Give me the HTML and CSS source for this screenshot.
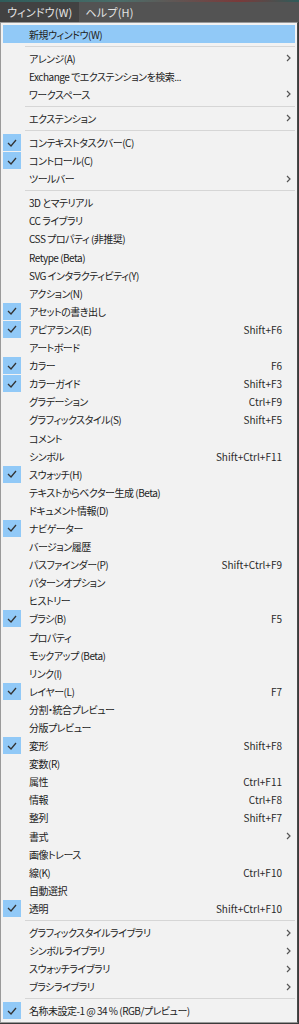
FILE: index.html
```html
<!DOCTYPE html>
<html lang="ja">
<head>
    <meta charset="UTF-8">
    <meta name="viewport" content="width=device-width, initial-scale=1.0">
    <title>ウィンドウ メニュー</title>
    <link rel="stylesheet" href="styles.css">
</head>
<body>
    <div class="strip"></div>

    <!-- Menu bar -->
    <div class="menubar">
        <span class="mb-item active">ウィンドウ(W)</span>
        <span class="mb-item">ヘルプ(H)</span>
    </div>

    <!-- Window dropdown -->
    <div class="menu">
        <div class="item hl"><span class="chk"></span><span class="label">新規ウィンドウ(W)</span></div>
        <div class="sep"></div>
        <div class="item"><span class="chk"></span><span class="label">アレンジ(A)</span><span class="sub"><svg width="5" height="8" viewBox="0 0 5 8"><path d="M1 1l3 3-3 3" fill="none" stroke="#555" stroke-width="1.2"/></svg></span></div>
        <div class="item"><span class="chk"></span><span class="label">Exchange でエクステンションを検索...</span></div>
        <div class="item"><span class="chk"></span><span class="label">ワークスペース</span><span class="sub"><svg width="5" height="8" viewBox="0 0 5 8"><path d="M1 1l3 3-3 3" fill="none" stroke="#555" stroke-width="1.2"/></svg></span></div>
        <div class="sep"></div>
        <div class="item"><span class="chk"></span><span class="label">エクステンション</span><span class="sub"><svg width="5" height="8" viewBox="0 0 5 8"><path d="M1 1l3 3-3 3" fill="none" stroke="#555" stroke-width="1.2"/></svg></span></div>
        <div class="sep"></div>
        <div class="item"><span class="chk on"><svg width="10" height="8" viewBox="0 0 10 8"><path d="M1 4l3 3 5-6" fill="none" stroke="#333" stroke-width="1.3"/></svg></span><span class="label">コンテキストタスクバー(C)</span></div>
        <div class="item"><span class="chk on"><svg width="10" height="8" viewBox="0 0 10 8"><path d="M1 4l3 3 5-6" fill="none" stroke="#333" stroke-width="1.3"/></svg></span><span class="label">コントロール(C)</span></div>
        <div class="item"><span class="chk"></span><span class="label">ツールバー</span><span class="sub"><svg width="5" height="8" viewBox="0 0 5 8"><path d="M1 1l3 3-3 3" fill="none" stroke="#555" stroke-width="1.2"/></svg></span></div>
        <div class="sep"></div>
        <div class="item"><span class="chk"></span><span class="label">3D とマテリアル</span></div>
        <div class="item"><span class="chk"></span><span class="label">CC ライブラリ</span></div>
        <div class="item"><span class="chk"></span><span class="label">CSS プロパティ (非推奨)</span></div>
        <div class="item"><span class="chk"></span><span class="label">Retype (Beta)</span></div>
        <div class="item"><span class="chk"></span><span class="label">SVG インタラクティビティ(Y)</span></div>
        <div class="item"><span class="chk"></span><span class="label">アクション(N)</span></div>
        <div class="item"><span class="chk on"><svg width="10" height="8" viewBox="0 0 10 8"><path d="M1 4l3 3 5-6" fill="none" stroke="#333" stroke-width="1.3"/></svg></span><span class="label">アセットの書き出し</span></div>
        <div class="item"><span class="chk on"><svg width="10" height="8" viewBox="0 0 10 8"><path d="M1 4l3 3 5-6" fill="none" stroke="#333" stroke-width="1.3"/></svg></span><span class="label">アピアランス(E)</span><span class="key">Shift+F6</span></div>
        <div class="item"><span class="chk"></span><span class="label">アートボード</span></div>
        <div class="item"><span class="chk on"><svg width="10" height="8" viewBox="0 0 10 8"><path d="M1 4l3 3 5-6" fill="none" stroke="#333" stroke-width="1.3"/></svg></span><span class="label">カラー</span><span class="key">F6</span></div>
        <div class="item"><span class="chk on"><svg width="10" height="8" viewBox="0 0 10 8"><path d="M1 4l3 3 5-6" fill="none" stroke="#333" stroke-width="1.3"/></svg></span><span class="label">カラーガイド</span><span class="key">Shift+F3</span></div>
        <div class="item"><span class="chk"></span><span class="label">グラデーション</span><span class="key">Ctrl+F9</span></div>
        <div class="item"><span class="chk"></span><span class="label">グラフィックスタイル(S)</span><span class="key">Shift+F5</span></div>
        <div class="item"><span class="chk"></span><span class="label">コメント</span></div>
        <div class="item"><span class="chk"></span><span class="label">シンボル</span><span class="key">Shift+Ctrl+F11</span></div>
        <div class="item"><span class="chk on"><svg width="10" height="8" viewBox="0 0 10 8"><path d="M1 4l3 3 5-6" fill="none" stroke="#333" stroke-width="1.3"/></svg></span><span class="label">スウォッチ(H)</span></div>
        <div class="item"><span class="chk"></span><span class="label">テキストからベクター生成 (Beta)</span></div>
        <div class="item"><span class="chk"></span><span class="label">ドキュメント情報(D)</span></div>
        <div class="item"><span class="chk on"><svg width="10" height="8" viewBox="0 0 10 8"><path d="M1 4l3 3 5-6" fill="none" stroke="#333" stroke-width="1.3"/></svg></span><span class="label">ナビゲーター</span></div>
        <div class="item"><span class="chk"></span><span class="label">バージョン履歴</span></div>
        <div class="item"><span class="chk"></span><span class="label">パスファインダー(P)</span><span class="key">Shift+Ctrl+F9</span></div>
        <div class="item"><span class="chk"></span><span class="label">パターンオプション</span></div>
        <div class="item"><span class="chk"></span><span class="label">ヒストリー</span></div>
        <div class="item"><span class="chk on"><svg width="10" height="8" viewBox="0 0 10 8"><path d="M1 4l3 3 5-6" fill="none" stroke="#333" stroke-width="1.3"/></svg></span><span class="label">ブラシ(B)</span><span class="key">F5</span></div>
        <div class="item"><span class="chk"></span><span class="label">プロパティ</span></div>
        <div class="item"><span class="chk"></span><span class="label">モックアップ (Beta)</span></div>
        <div class="item"><span class="chk"></span><span class="label">リンク(I)</span></div>
        <div class="item"><span class="chk on"><svg width="10" height="8" viewBox="0 0 10 8"><path d="M1 4l3 3 5-6" fill="none" stroke="#333" stroke-width="1.3"/></svg></span><span class="label">レイヤー(L)</span><span class="key">F7</span></div>
        <div class="item"><span class="chk"></span><span class="label">分割・統合プレビュー</span></div>
        <div class="item"><span class="chk"></span><span class="label">分版プレビュー</span></div>
        <div class="item"><span class="chk on"><svg width="10" height="8" viewBox="0 0 10 8"><path d="M1 4l3 3 5-6" fill="none" stroke="#333" stroke-width="1.3"/></svg></span><span class="label">変形</span><span class="key">Shift+F8</span></div>
        <div class="item"><span class="chk"></span><span class="label">変数(R)</span></div>
        <div class="item"><span class="chk"></span><span class="label">属性</span><span class="key">Ctrl+F11</span></div>
        <div class="item"><span class="chk"></span><span class="label">情報</span><span class="key">Ctrl+F8</span></div>
        <div class="item"><span class="chk"></span><span class="label">整列</span><span class="key">Shift+F7</span></div>
        <div class="item"><span class="chk"></span><span class="label">書式</span><span class="sub"><svg width="5" height="8" viewBox="0 0 5 8"><path d="M1 1l3 3-3 3" fill="none" stroke="#555" stroke-width="1.2"/></svg></span></div>
        <div class="item"><span class="chk"></span><span class="label">画像トレース</span></div>
        <div class="item"><span class="chk"></span><span class="label">線(K)</span><span class="key">Ctrl+F10</span></div>
        <div class="item"><span class="chk"></span><span class="label">自動選択</span></div>
        <div class="item"><span class="chk on"><svg width="10" height="8" viewBox="0 0 10 8"><path d="M1 4l3 3 5-6" fill="none" stroke="#333" stroke-width="1.3"/></svg></span><span class="label">透明</span><span class="key">Shift+Ctrl+F10</span></div>
        <div class="sep"></div>
        <div class="item"><span class="chk"></span><span class="label">グラフィックスタイルライブラリ</span><span class="sub"><svg width="5" height="8" viewBox="0 0 5 8"><path d="M1 1l3 3-3 3" fill="none" stroke="#555" stroke-width="1.2"/></svg></span></div>
        <div class="item"><span class="chk"></span><span class="label">シンボルライブラリ</span><span class="sub"><svg width="5" height="8" viewBox="0 0 5 8"><path d="M1 1l3 3-3 3" fill="none" stroke="#555" stroke-width="1.2"/></svg></span></div>
        <div class="item"><span class="chk"></span><span class="label">スウォッチライブラリ</span><span class="sub"><svg width="5" height="8" viewBox="0 0 5 8"><path d="M1 1l3 3-3 3" fill="none" stroke="#555" stroke-width="1.2"/></svg></span></div>
        <div class="item"><span class="chk"></span><span class="label">ブラシライブラリ</span><span class="sub"><svg width="5" height="8" viewBox="0 0 5 8"><path d="M1 1l3 3-3 3" fill="none" stroke="#555" stroke-width="1.2"/></svg></span></div>
        <div class="sep"></div>
        <div class="item"><span class="chk on"><svg width="10" height="8" viewBox="0 0 10 8"><path d="M1 4l3 3 5-6" fill="none" stroke="#333" stroke-width="1.3"/></svg></span><span class="label">名称未設定-1 @ 34 % (RGB/プレビュー)</span></div>
    </div>
</body>
</html>
```

FILE: styles.css
```css
body {
    margin: 0;
    background: #3a3a3a;
    font-family: "Noto Sans CJK JP", "Noto Sans", sans-serif;
    font-feature-settings: "palt";
    -webkit-font-smoothing: antialiased;
}
.strip {
    height: 2px;
    background: linear-gradient(90deg, #2f5c5a, #4a6e6a 40%, #7a3a3a 80%, #2f5c5a);
}
.menubar {
    display: flex;
    height: 20px;
    background: #535353;
}
.mb-item {
    display: flex;
    align-items: center;
    padding: 0 6px 0 7px;
    color: #e4e4e4;
    font-size: 11px;
    letter-spacing: 0.2px;
}
.mb-item.active {
    background: #424242;
}
.menu {
    width: 292px;
    padding: 2px;
    background: #f2f2f2;
    border: 1px solid #9a9a9a;
    border-right-color: #4a4a4a;
}
.item {
    display: flex;
    align-items: center;
    height: 18.1px;
    color: #222;
    font-size: 10px;
}
.item.hl {
    background: #91c9f7;
}
.chk {
    display: flex;
    align-items: center;
    justify-content: center;
    width: 18px;
    height: 17px;
    flex: none;
}
.chk.on {
    background: #91c9f7;
}
.label {
    flex: 1;
    margin-left: 8px;
    white-space: nowrap;
    letter-spacing: -0.5px;
}
.key {
    margin-right: 13px;
    color: #2a2a2a;
}
.sub {
    display: flex;
    align-items: center;
    width: 13px;
    padding-left: 4px;
    box-sizing: border-box;
    margin-left: auto;
}
.sep {
    height: 6px;
    margin-left: 22px;
    display: flex;
    align-items: center;
}
.sep::after {
    content: "";
    flex: 1;
    height: 1px;
    background: #d6d6d6;
}
```
